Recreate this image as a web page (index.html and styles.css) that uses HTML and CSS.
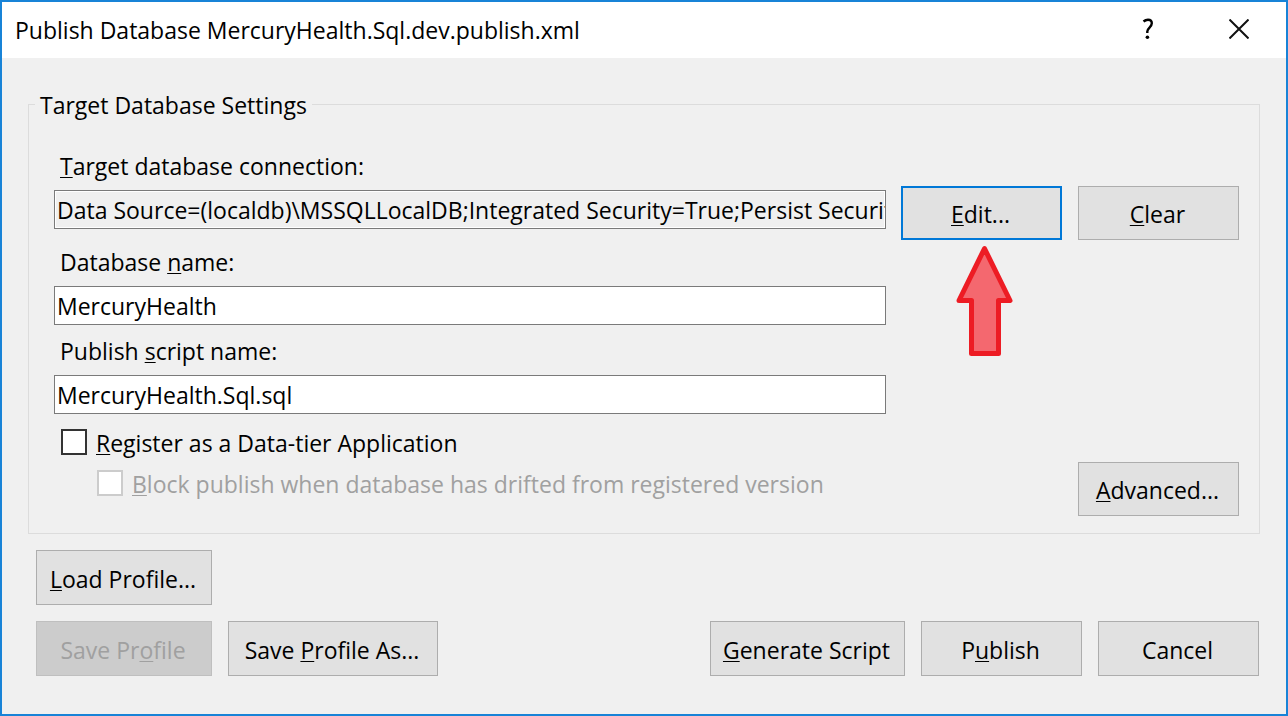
FILE: index.html
```html
<!DOCTYPE html>
<html lang="en">
<head>
<meta charset="utf-8">
<title>Publish Database</title>
<link rel="stylesheet" href="styles.css">
</head>
<body>
<main class="dialog">
  <header class="titlebar">
    <h1 class="title">Publish Database MercuryHealth.Sql.dev.publish.xml</h1>
    <div class="window-controls">
      <button class="window-button" type="button" aria-label="Help">
        <svg width="12" height="22" viewBox="0 0 12 22" fill="none" stroke="#000" stroke-width="2.4"><path d="M1.500 3.500C3 2.200 4.300 1.700 6 1.700C8.600 1.700 9.800 3.200 9.800 5.300C9.800 9.300 5.300 9.800 5.300 13.600V15"/><circle cx="5.400" cy="19.300" r="1.800" fill="#000" stroke="none"/></svg>
      </button>
      <button class="window-button" type="button" aria-label="Close">
        <svg width="20" height="20" viewBox="0 0 20 20" fill="none" stroke="#111" stroke-width="2"><path d="M.5.5L19.500 19.500M19.500.5L.5 19.500"/></svg>
      </button>
    </div>
  </header>
  <form class="content">
    <fieldset class="group">
      <legend class="legend">Target Database Settings</legend>
      <div class="settings">
        <div class="fields">
          <div class="field field-connection">
            <label class="label" for="connection"><u>T</u>arget database connection:</label>
            <input class="textbox" id="connection" type="text" readonly value="Data Source=(localdb)\MSSQLLocalDB;Integrated Security=True;Persist Security Info=False">
          </div>
          <div class="field">
            <label class="label" for="database">Database <u>n</u>ame:</label>
            <input class="textbox" id="database" type="text" value="MercuryHealth">
          </div>
          <div class="field">
            <label class="label" for="script">Publish <u>s</u>cript name:</label>
            <input class="textbox" id="script" type="text" value="MercuryHealth.Sql.sql">
          </div>
          <div class="options">
            <div class="option">
              <input class="checkbox" id="register" type="checkbox">
              <label class="option-label" for="register"><u>R</u>egister as a Data-tier Application</label>
            </div>
            <div class="option option-nested">
              <input class="checkbox" id="block" type="checkbox" disabled>
              <label class="option-label" for="block"><u>B</u>lock publish when database has drifted from registered version</label>
            </div>
          </div>
        </div>
        <div class="side">
          <div class="button-row">
            <div class="edit-anchor">
              <button class="button button-default" type="button"><u>E</u>dit...</button>
              <svg class="arrow" width="58" height="112" viewBox="0 0 58 112" fill="#f4686f" stroke="#ed1c24" stroke-width="5" stroke-linejoin="round" aria-hidden="true"><path d="M29.500 3.500L55 55.500H43.500V108.500H16.500V55.500H4Z"/></svg>
            </div>
            <button class="button" type="button"><u>C</u>lear</button>
          </div>
          <button class="button" type="button"><u>A</u>dvanced...</button>
        </div>
      </div>
    </fieldset>
    <footer class="actions">
      <button class="button button-profile" type="button"><u>L</u>oad Profile...</button>
      <div class="button-row">
        <button class="button button-profile" type="button" disabled>Save Pr<u>o</u>file</button>
        <button class="button button-save-as" type="button">Save <u>P</u>rofile As...</button>
        <button class="button button-generate" type="button"><u>G</u>enerate Script</button>
        <button class="button" type="submit">P<u>u</u>blish</button>
        <button class="button" type="button">Cancel</button>
      </div>
    </footer>
  </form>
</main>
</body>
</html>
```
FILE: styles.css
```css
* { box-sizing: border-box; }
body { margin: 0; }
body, input, button {
  font-family: "Open Sans", "Noto Sans", sans-serif;
  font-size: 23px;
  line-height: 32px;
  color: #000;
}
u {
  text-decoration-thickness: 1px;
  text-underline-offset: 2px;
  text-decoration-skip-ink: none;
}
.dialog {
  min-height: 100vh;
  background: #f0f0f0;
  border: 2px solid #1883d7;
}
.titlebar {
  display: flex;
  align-items: center;
  justify-content: space-between;
  height: 56px;
  padding: 0 2px 0 13px;
  background: #fff;
}
.title { margin: 0; font-size: 23px; font-weight: 400; }
.window-controls { display: flex; height: 100%; }
.window-button {
  display: flex;
  align-items: center;
  justify-content: center;
  width: 91px;
  padding: 0 0 2px;
  border: 0;
  background: transparent;
}
.content { padding: 29px 26px 36px; }
.group {
  min-width: 0;
  margin: 0;
  padding: 29px 20px 17px 6px;
  border: 1px solid #dcdcdc;
}
.legend { padding: 2px 5px 0; }
.settings {
  display: flex;
  gap: 15px;
  padding-left: 19px;
}
.fields { flex: 1; min-width: 0; }
.field { display: flex; flex-direction: column; gap: 8px; margin-bottom: 10px; }
.field-connection { margin-bottom: 17px; }
.label { padding-left: 6px; }
.textbox {
  width: 100%;
  height: 39px;
  padding: 1px 0 0 2px;
  border: 1px solid #7a7a7a;
  border-radius: 0;
  background: #fff;
}
.textbox:read-only { background: #f0f0f0; box-shadow: inset 0 0 0 1px #fff; }
.options { display: grid; gap: 7px; padding: 1px 0 16px 7px; }
.option { display: flex; align-items: center; gap: 9px; }
.option-nested { padding-left: 36px; color: #a0a0a0; }
.option-label { padding-top: 2px; }
.checkbox {
  appearance: none;
  flex: none;
  width: 26px;
  height: 26px;
  margin: 0;
  border: 2px solid #333;
  background: #fff;
}
.checkbox:disabled { border-color: #ccc; }
.side {
  display: flex;
  flex-direction: column;
  align-items: flex-end;
  justify-content: space-between;
  padding-top: 36px;
}
.button-row { display: flex; gap: 16px; }
.button {
  width: 161px;
  height: 54px;
  padding: 2px 2px 0 0;
  border: 1px solid #adadad;
  border-radius: 0;
  background: #e1e1e1;
  white-space: nowrap;
}
.button-default { border: 2px solid #0078d7; }
.button:disabled { border-color: #bfbfbf; background: #ccc; color: #a0a0a0; }
.edit-anchor { position: relative; }
.arrow { position: absolute; top: 59px; left: 54px; }
.actions {
  display: flex;
  flex-direction: column;
  gap: 16px;
  padding: 16px 1px 0 8px;
}
.actions .button { height: 55px; }
.actions .button-profile { width: 176px; }
.actions .button-save-as { width: 210px; }
.actions .button-generate { width: 195px; margin-left: auto; }
```
